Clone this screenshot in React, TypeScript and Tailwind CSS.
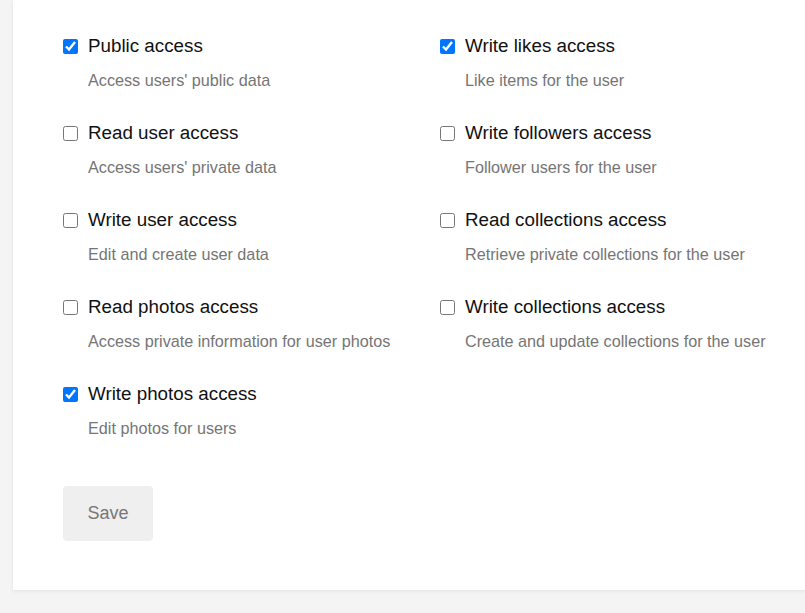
import { useState } from 'react'

interface Scope {
  id: string
  label: string
  description: string
}

const leftScopes: Scope[] = [
  { id: 'public', label: 'Public access', description: "Access users' public data" },
  { id: 'read_user', label: 'Read user access', description: "Access users' private data" },
  { id: 'write_user', label: 'Write user access', description: 'Edit and create user data' },
  { id: 'read_photos', label: 'Read photos access', description: 'Access private information for user photos' },
  { id: 'write_photos', label: 'Write photos access', description: 'Edit photos for users' },
]

const rightScopes: Scope[] = [
  { id: 'write_likes', label: 'Write likes access', description: 'Like items for the user' },
  { id: 'write_followers', label: 'Write followers access', description: 'Follower users for the user' },
  { id: 'read_collections', label: 'Read collections access', description: 'Retrieve private collections for the user' },
  { id: 'write_collections', label: 'Write collections access', description: 'Create and update collections for the user' },
]

function ScopeItem({ scope, checked, onToggle }: { scope: Scope; checked: boolean; onToggle: () => void }) {
  return (
    <div className="flex flex-col">
      <label className="flex items-center h-6 cursor-pointer">
        <input
          type="checkbox"
          checked={checked}
          onChange={onToggle}
          className="w-[15px] h-[15px] m-0 accent-[#0075ff]"
        />
        <span className="ml-[10px] text-[18.8px] leading-6 text-[#111]">{scope.label}</span>
      </label>
      <p className="ml-[25px] mt-[12px] text-[16.2px] leading-5 text-[#757575]">{scope.description}</p>
    </div>
  )
}

export default function App() {
  const [selected, setSelected] = useState<Record<string, boolean>>({
    public: true,
    write_photos: true,
    write_likes: true,
  })

  const toggle = (id: string) => setSelected((s) => ({ ...s, [id]: !s[id] }))

  return (
    <div
      className="h-[613px] w-[805px] overflow-hidden bg-[#f4f4f4] pl-[13px]"
      style={{ fontFamily: '"Liberation Sans", Arial, sans-serif' }}
    >
      <div className="w-[900px] bg-white shadow-[0_1px_4px_rgba(0,0,0,0.08)] pl-[50px] pt-[34px] pb-[49px]">
        <div className="flex">
          <div className="w-[377px] flex flex-col gap-[31px]">
            {leftScopes.map((s) => (
              <ScopeItem key={s.id} scope={s} checked={!!selected[s.id]} onToggle={() => toggle(s.id)} />
            ))}
          </div>
          <div className="flex flex-col gap-[31px]">
            {rightScopes.map((s) => (
              <ScopeItem key={s.id} scope={s} checked={!!selected[s.id]} onToggle={() => toggle(s.id)} />
            ))}
          </div>
        </div>
        <button className="mt-[48px] w-[90px] h-[55px] rounded-[4px] bg-[#efefef] text-[18px] text-[#777]">
          Save
        </button>
      </div>
    </div>
  )
}
